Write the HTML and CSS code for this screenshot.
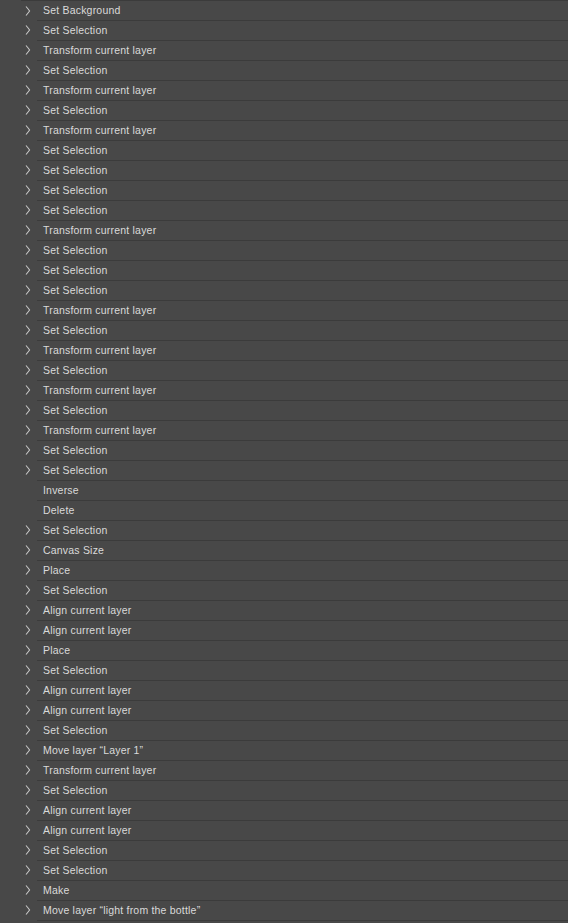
FILE: index.html
```html
<!DOCTYPE html>
<html lang="en">
<head>
    <meta charset="UTF-8">
    <meta name="viewport" content="width=device-width, initial-scale=1.0">
    <title>History</title>
    <link rel="stylesheet" href="styles.css">
</head>
<body>
    <div class="history" id="history"></div>

    <script>
        const steps = [
            "Set Background", "Set Selection", "Transform current layer", "Set Selection",
            "Transform current layer", "Set Selection", "Transform current layer", "Set Selection",
            "Set Selection", "Set Selection", "Set Selection", "Transform current layer",
            "Set Selection", "Set Selection", "Set Selection", "Transform current layer",
            "Set Selection", "Transform current layer", "Set Selection", "Transform current layer",
            "Set Selection", "Transform current layer", "Set Selection", "Set Selection",
            "-Inverse", "-Delete", "Set Selection", "Canvas Size", "Place", "Set Selection",
            "Align current layer", "Align current layer", "Place", "Set Selection",
            "Align current layer", "Align current layer", "Set Selection", "Move layer \u201cLayer 1\u201d",
            "Transform current layer", "Set Selection", "Align current layer", "Align current layer",
            "Set Selection", "Set Selection", "Make", "Move layer \u201clight from the bottle\u201d"
        ];

        const chevronSvg = '<svg width="6" height="12" viewBox="0 0 6 12"><path d="M1 1.5 Q3.2 4 4.6 6 Q3.2 8 1 10.5" fill="none" stroke="#c8c8c8" stroke-width="1.1"/></svg>';

        const list = document.getElementById("history");

        steps.forEach((step, i) => {
            const row = document.createElement("div");
            row.classList.add("step");
            if (i === 0) row.classList.add("first");

            const chev = document.createElement("span");
            chev.classList.add("chev");
            const plain = step.startsWith("-");
            if (!plain) chev.innerHTML = chevronSvg;

            const label = document.createElement("span");
            label.classList.add("label");
            label.textContent = plain ? step.slice(1) : step;

            row.appendChild(chev);
            row.appendChild(label);
            list.appendChild(row);
        });
    </script>
</body>
</html>
```

FILE: styles.css
```css
body {
    margin: 0;
    padding: 0;
    background: #484848;
    font-family: "Liberation Sans", Arial, sans-serif;
    font-size: 10.5px;
    color: #dadada;
}

.history {
    border-bottom: 1px solid #3b3b3b;
    margin-left: 37px;
}

.step {
    display: flex;
    height: 20px;
    margin-left: -37px;
}

.chev {
    width: 37px;
    flex: none;
    display: flex;
    align-items: center;
    padding-left: 25px;
    box-sizing: border-box;
}

.chev svg {
    display: block;
}

.label {
    flex: 1;
    border-top: 1px solid #3b3b3b;
    padding-left: 6px;
    line-height: 19px;
    letter-spacing: 0.2px;
}

.step.first .chev {
    border-top: 1px solid #3b3b3b;
    margin-left: 21px;
    width: 16px;
    padding-left: 4px;
}
```
